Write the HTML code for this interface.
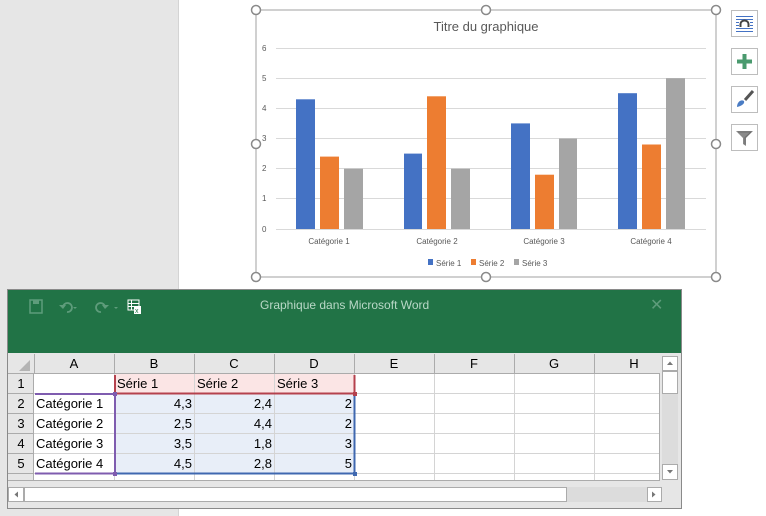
<!DOCTYPE html>
<html><head><meta charset="utf-8"><style>
*{margin:0;padding:0;box-sizing:border-box}
body{width:766px;height:516px;position:relative;overflow:hidden;background:#fff;font-family:"Liberation Sans","DejaVu Sans",sans-serif}
.a{position:absolute}
.btn{position:absolute;left:731px;width:27px;height:27px;border:1px solid #bdbdbd;background:#fff}
.cell{position:absolute;height:20px;font-size:13px;line-height:20px;color:#000;white-space:nowrap}
</style></head><body>
<div class="a" style="left:0;top:0;width:179px;height:516px;background:#e6e6e6;border-right:1px solid #d4d4d4"></div>

<svg class="a" style="left:0;top:0" width="766" height="290">
<rect x="256" y="10" width="460" height="267" fill="#fff" stroke="#a0a0a0" stroke-width="1"/>
<text x="486" y="31" font-size="13" fill="#595959" text-anchor="middle" font-family="Liberation Sans">Titre du graphique</text>
<g stroke="#d9d9d9" stroke-width="1">
<line x1="276" x2="706" y1="48.5" y2="48.5"/><line x1="276" x2="706" y1="78.5" y2="78.5"/>
<line x1="276" x2="706" y1="108.5" y2="108.5"/><line x1="276" x2="706" y1="138.5" y2="138.5"/>
<line x1="276" x2="706" y1="168.5" y2="168.5"/><line x1="276" x2="706" y1="198.5" y2="198.5"/>
<line x1="276" x2="706" y1="229.5" y2="229.5"/></g>
<g font-size="8" fill="#595959" font-family="Liberation Sans">
<text x="262" y="51">6</text><text x="262" y="81">5</text><text x="262" y="111">4</text><text x="262" y="141">3</text><text x="262" y="171">2</text><text x="262" y="201">1</text><text x="262" y="232">0</text>
</g>
<g>
<rect x="296" y="99.3" width="19" height="129.7" fill="#4472c4"/><rect x="320" y="156.6" width="19" height="72.4" fill="#ed7d31"/><rect x="344" y="168.7" width="19" height="60.3" fill="#a5a5a5"/>
<rect x="404" y="153.6" width="18" height="75.4" fill="#4472c4"/><rect x="427" y="96.3" width="19" height="132.7" fill="#ed7d31"/><rect x="451" y="168.7" width="19" height="60.3" fill="#a5a5a5"/>
<rect x="511" y="123.4" width="19" height="105.6" fill="#4472c4"/><rect x="535" y="174.7" width="19" height="54.3" fill="#ed7d31"/><rect x="559" y="138.5" width="18" height="90.5" fill="#a5a5a5"/>
<rect x="618" y="93.2" width="19" height="135.8" fill="#4472c4"/><rect x="642" y="144.5" width="19" height="84.5" fill="#ed7d31"/><rect x="666" y="78.2" width="19" height="150.8" fill="#a5a5a5"/>
</g>
<g font-size="8" fill="#595959" text-anchor="middle" font-family="Liberation Sans">
<text x="329" y="244">Catégorie 1</text><text x="437" y="244">Catégorie 2</text><text x="544" y="244">Catégorie 3</text><text x="651" y="244">Catégorie 4</text>
</g>
<g font-size="8" fill="#595959" font-family="Liberation Sans">
<rect x="428" y="259" width="5" height="6" fill="#4472c4"/><text x="436" y="266">Série 1</text>
<rect x="471" y="259" width="5" height="6" fill="#ed7d31"/><text x="479" y="266">Série 2</text>
<rect x="514" y="259" width="5" height="6" fill="#a5a5a5"/><text x="522" y="266">Série 3</text>
</g>
<g fill="#fff" stroke="#8a8a8a" stroke-width="1.5">
<circle cx="256" cy="10" r="4.5"/><circle cx="486" cy="10" r="4.5"/><circle cx="716" cy="10" r="4.5"/>
<circle cx="256" cy="144" r="4.5"/><circle cx="716" cy="144" r="4.5"/>
<circle cx="256" cy="277" r="4.5"/><circle cx="486" cy="277" r="4.5"/><circle cx="716" cy="277" r="4.5"/>
</g>
</svg>

<div class="btn" style="top:10px"><svg width="25" height="25"><g stroke="#4472c4" stroke-width="1"><line x1="4" x2="21" y1="5.5" y2="5.5"/><line x1="4" x2="21" y1="8.5" y2="8.5"/><line x1="4" x2="7" y1="11.5" y2="11.5"/><line x1="18" x2="21" y1="11.5" y2="11.5"/><line x1="4" x2="7" y1="14.5" y2="14.5"/><line x1="18" x2="21" y1="14.5" y2="14.5"/><line x1="4" x2="21" y1="17.5" y2="17.5"/><line x1="4" x2="21" y1="20.5" y2="20.5"/></g><path d="M8.5 16 V13 A4 3.5 0 0 1 16.5 13 V16" fill="none" stroke="#444" stroke-width="2"/></svg></div>
<div class="btn" style="top:48px"><svg width="25" height="25"><path d="M12.5 5 V20 M5 12.5 H20" stroke="#4a9a6e" stroke-width="4"/></svg></div>
<div class="btn" style="top:86px"><svg width="25" height="25"><path d="M13 13 L21 4" stroke="#555" stroke-width="3"/><path d="M5 20 C5 15 9 12 12 14 C13 17 9 19 5 20Z" fill="#4a7cc4"/></svg></div>
<div class="btn" style="top:124px"><svg width="25" height="25"><path d="M4 6 H21 L14 13 V21 L11 19 V13Z" fill="#8a8a8a"/><path d="M6 7 H19 L13 12.5 V19.5" fill="none" stroke="#666" stroke-width="0.8"/></svg></div>

<div class="a" style="left:7px;top:289px;width:675px;height:220px;background:#e6e6e6;border:1px solid #8a8a8a"></div>
<div class="a" style="left:8px;top:290px;width:673px;height:63px;background:#217346"></div>
<div class="a" style="left:260px;top:298px;font-size:12px;color:#b9d8c7">Graphique dans Microsoft Word</div>
<div class="a" style="left:650px;top:295px;font-size:16px;color:#5e9c7b">✕</div>
<svg class="a" style="left:25px;top:296px" width="130" height="22">
<rect x="5" y="4" width="12" height="13" fill="none" stroke="#5e9c7b" stroke-width="1.5"/><rect x="8" y="4" width="6" height="4" fill="#5e9c7b"/>
<path d="M38 11 A4.5 4.5 0 1 1 42 16" fill="none" stroke="#5e9c7b" stroke-width="1.8"/><path d="M34 9 L38 13 L41 9" fill="#5e9c7b"/>
<path d="M48 11 l2 2 l2 -2" fill="#5e9c7b"/>
<path d="M80 11 A4.5 4.5 0 1 0 76 16" fill="none" stroke="#5e9c7b" stroke-width="1.8"/><path d="M84 9 L80 13 L77 9" fill="#5e9c7b"/>
<path d="M89 11 l2 2 l2 -2" fill="#5e9c7b"/>
<rect x="103" y="4" width="11" height="10" fill="none" stroke="#fff" stroke-width="1"/><path d="M103 7.5 H114 M103 10.5 H114 M106.5 4 V14" stroke="#fff" stroke-width="1"/><rect x="109" y="10" width="7" height="8" fill="#fff"/><text x="110" y="17" font-size="7" fill="#217346">x</text>
</svg>

<div class="a" style="left:8px;top:354px;width:652px;height:127px;background:#fff"></div>
<div class="a" style="left:8px;top:354px;width:652px;height:20px;background:#e6e6e6;border-bottom:1px solid #ababab"></div>
<div class="a" style="left:8px;top:374px;width:26px;height:107px;background:#e6e6e6;border-right:1px solid #ababab"></div>
<svg class="a" style="left:8px;top:354px" width="26" height="20"><path d="M22 6 V17 H11Z" fill="#b4b4b4"/></svg>
<div class="a" style="left:115px;top:374px;width:240px;height:20px;background:#fbe5e5"></div>
<div class="a" style="left:115px;top:394px;width:240px;height:80px;background:#e8eef8"></div>
<svg class="a" style="left:8px;top:354px" width="652" height="127">
<g stroke="#d4d4d4" stroke-width="1">
<line x1="106.5" x2="106.5" y1="20" y2="127"/><line x1="186.5" x2="186.5" y1="20" y2="127"/><line x1="266.5" x2="266.5" y1="20" y2="127"/><line x1="346.5" x2="346.5" y1="20" y2="127"/><line x1="426.5" x2="426.5" y1="20" y2="127"/><line x1="506.5" x2="506.5" y1="20" y2="127"/><line x1="586.5" x2="586.5" y1="20" y2="127"/>
<line x1="26" x2="652" y1="39.5" y2="39.5"/><line x1="26" x2="652" y1="59.5" y2="59.5"/><line x1="26" x2="652" y1="79.5" y2="79.5"/><line x1="26" x2="652" y1="99.5" y2="99.5"/><line x1="26" x2="652" y1="119.5" y2="119.5"/>
</g>
<g stroke="#ababab" stroke-width="1">
<line x1="26.5" x2="26.5" y1="0" y2="20"/><line x1="106.5" x2="106.5" y1="0" y2="20"/><line x1="186.5" x2="186.5" y1="0" y2="20"/><line x1="266.5" x2="266.5" y1="0" y2="20"/><line x1="346.5" x2="346.5" y1="0" y2="20"/><line x1="426.5" x2="426.5" y1="0" y2="20"/><line x1="506.5" x2="506.5" y1="0" y2="20"/><line x1="586.5" x2="586.5" y1="0" y2="20"/>
<line x1="0" x2="26" y1="39.5" y2="39.5"/><line x1="0" x2="26" y1="59.5" y2="59.5"/><line x1="0" x2="26" y1="79.5" y2="79.5"/><line x1="0" x2="26" y1="99.5" y2="99.5"/><line x1="0" x2="26" y1="119.5" y2="119.5"/>
<line x1="651.5" x2="651.5" y1="20" y2="127"/><line x1="0" x2="652" y1="126.5" y2="126.5"/>
</g>
<path d="M107 21 V39.5 H346.5 V21" fill="none" stroke="#b5414d" stroke-width="2"/>
<path d="M27 40 H107 V119.5 H27" fill="none" stroke="#7f5caf" stroke-width="2"/>
<path d="M107 119.5 H346.5 V40" fill="none" stroke="#3f68b0" stroke-width="2"/>
<rect x="105" y="38" width="4" height="4" fill="#7f5caf"/><rect x="345" y="38" width="4" height="4" fill="#b5414d"/><rect x="105" y="118" width="4" height="4" fill="#7f5caf"/><rect x="345" y="118" width="4" height="4" fill="#3f68b0"/>
</svg>
<div class="cell" style="left:34px;top:354px;width:80px;text-align:center">A</div>
<div class="cell" style="left:114px;top:354px;width:80px;text-align:center">B</div>
<div class="cell" style="left:194px;top:354px;width:80px;text-align:center">C</div>
<div class="cell" style="left:274px;top:354px;width:80px;text-align:center">D</div>
<div class="cell" style="left:354px;top:354px;width:80px;text-align:center">E</div>
<div class="cell" style="left:434px;top:354px;width:80px;text-align:center">F</div>
<div class="cell" style="left:514px;top:354px;width:80px;text-align:center">G</div>
<div class="cell" style="left:594px;top:354px;width:80px;text-align:center">H</div>
<div class="cell" style="left:8px;top:374px;width:26px;text-align:center">1</div>
<div class="cell" style="left:8px;top:394px;width:26px;text-align:center">2</div>
<div class="cell" style="left:8px;top:414px;width:26px;text-align:center">3</div>
<div class="cell" style="left:8px;top:434px;width:26px;text-align:center">4</div>
<div class="cell" style="left:8px;top:454px;width:26px;text-align:center">5</div>
<div class="cell" style="left:117px;top:374px">Série 1</div>
<div class="cell" style="left:197px;top:374px">Série 2</div>
<div class="cell" style="left:277px;top:374px">Série 3</div>
<div class="cell" style="left:36px;top:394px">Catégorie 1</div>
<div class="cell" style="left:36px;top:414px">Catégorie 2</div>
<div class="cell" style="left:36px;top:434px">Catégorie 3</div>
<div class="cell" style="left:36px;top:454px">Catégorie 4</div>
<div class="cell" style="left:114px;top:394px;width:78px;text-align:right">4,3</div>
<div class="cell" style="left:114px;top:414px;width:78px;text-align:right">2,5</div>
<div class="cell" style="left:114px;top:434px;width:78px;text-align:right">3,5</div>
<div class="cell" style="left:114px;top:454px;width:78px;text-align:right">4,5</div>
<div class="cell" style="left:194px;top:394px;width:78px;text-align:right">2,4</div>
<div class="cell" style="left:194px;top:414px;width:78px;text-align:right">4,4</div>
<div class="cell" style="left:194px;top:434px;width:78px;text-align:right">1,8</div>
<div class="cell" style="left:194px;top:454px;width:78px;text-align:right">2,8</div>
<div class="cell" style="left:274px;top:394px;width:78px;text-align:right">2</div>
<div class="cell" style="left:274px;top:414px;width:78px;text-align:right">2</div>
<div class="cell" style="left:274px;top:434px;width:78px;text-align:right">3</div>
<div class="cell" style="left:274px;top:454px;width:78px;text-align:right">5</div>

<div class="a" style="left:662px;top:356px;width:16px;height:124px;background:#dcdcdc"></div>
<div class="a" style="left:662px;top:356px;width:16px;height:15px;background:#fff;border:1px solid #ababab"></div>
<div class="a" style="left:662px;top:371px;width:16px;height:23px;background:#fff;border:1px solid #ababab"></div>
<div class="a" style="left:662px;top:464px;width:16px;height:16px;background:#fff;border:1px solid #ababab"></div>
<svg class="a" style="left:662px;top:356px" width="16" height="124"><path d="M5 9 L8 5.5 L11 9Z" fill="#777"/><path d="M5 114 L8 117.5 L11 114Z" fill="#777"/></svg>
<div class="a" style="left:8px;top:487px;width:654px;height:15px;background:#dcdcdc"></div>
<div class="a" style="left:8px;top:487px;width:16px;height:15px;background:#fff;border:1px solid #ababab"></div>
<div class="a" style="left:24px;top:487px;width:543px;height:15px;background:#fff;border:1px solid #ababab"></div>
<div class="a" style="left:647px;top:487px;width:15px;height:15px;background:#fff;border:1px solid #ababab"></div>
<svg class="a" style="left:8px;top:487px" width="654" height="15"><path d="M10 4.5 L6.5 7.5 L10 10.5Z" fill="#777"/><path d="M644 4.5 L647.5 7.5 L644 10.5Z" fill="#777"/></svg>
</body></html>
